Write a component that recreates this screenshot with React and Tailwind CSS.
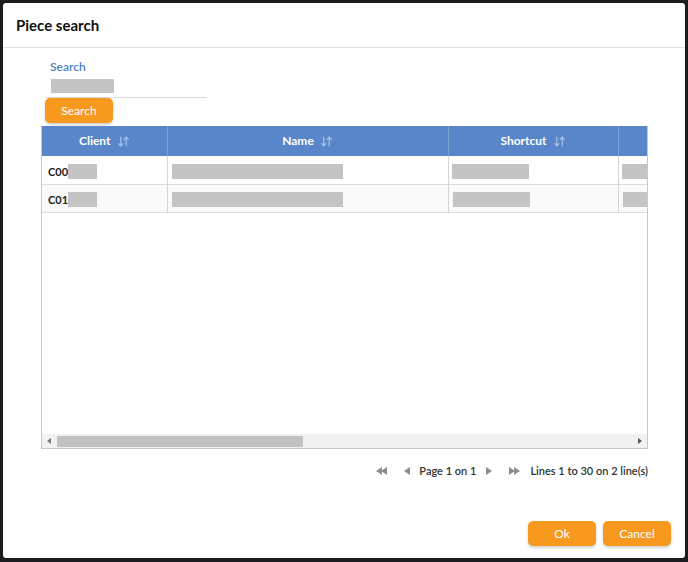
import React from 'react';
import { ArrowDownUp } from 'lucide-react';

const font = { fontFamily: 'Lato, "Noto Sans", sans-serif' };

const rows = [
    { code: 'C00', nameW: 171, shortW: 77 },
    { code: 'C01', nameW: 171, shortW: 77 },
];

const Block = ({ w, h = 15, block }) => (
    <span className={`${block ? 'block' : 'inline-block align-middle'} bg-[#c4c4c4]`} style={{ width: w, height: h }} />
);

const HeadCell = ({ label, w, last }) => (
    <th
        className={`h-[30px] text-center text-[12px] font-bold text-white ${last ? '' : 'border-r border-[#7fa2d6]'}`}
        style={{ width: w }}
    >
        {label && (
            <span className="inline-flex items-center gap-1.5">
                {label}
                <ArrowDownUp size={13} strokeWidth={2.2} className="text-[#a9c6ee]" />
            </span>
        )}
    </th>
);

const Tri = ({ dir = 'left', double }) => {
    const one = dir === 'left' ? 'M7 1 L1 5 L7 9 Z' : 'M1 1 L7 5 L1 9 Z';
    return (
        <svg width={double ? 13 : 8} height="10" viewBox={double ? '0 0 13 10' : '0 0 8 10'} className="fill-[#8c8c8c]">
            <path d={one} />
            {double && <path d={one} transform="translate(5 0)" />}
        </svg>
    );
};

const App = () => {
    return (
        <div className="h-[562px] w-[688px] bg-[#1c1c1e] pt-[3px] pl-[3px] pr-[3px] pb-[4px]" style={font}>
            <div className="flex h-full flex-col rounded-[3px] bg-white">
                {/* header */}
                <div className="flex h-[45px] items-center border-b border-[#e3e3e3] px-[13px]">
                    <h1 className="text-[15px] font-bold text-[#111]">Piece search</h1>
                </div>

                <div className="flex flex-1 flex-col pl-[38px] pr-[37px]">
                    {/* search field */}
                    <div className="ml-[4px] mt-[12px] w-[162px]">
                        <div className="pl-[5px] text-[12px] font-semibold leading-[14px] text-[#4f7fbf]">Search</div>
                        <div className="mt-[5px] border-b border-[#d9d9d9] pb-[4px] pl-[6px]">
                            <Block w={63} h={14} block />
                        </div>
                    </div>
                    <button className="ml-[4px] h-[25px] w-[68px] rounded-[5px] bg-[#f7991e] text-[12px] text-white shadow-[0_2px_3px_rgba(0,0,0,0.18)]">
                        Search
                    </button>

                    {/* table */}
                    <div className="mt-[3px] flex h-[323px] w-[607px] flex-col overflow-hidden border border-[#c8c8c8] border-t-0">
                        <div className="flex-1 overflow-hidden">
                            <table className="table-fixed border-collapse" style={{ width: 776 }}>
                                <thead className="bg-[#5886c9]">
                                    <tr>
                                        <HeadCell label="Client" w={125} />
                                        <HeadCell label="Name" w={281} />
                                        <HeadCell label="Shortcut" w={170} />
                                        <HeadCell label="" w={200} last />
                                    </tr>
                                </thead>
                                <tbody>
                                    {rows.map((r, i) => (
                                        <tr key={i} className={`h-[28px] border-b border-[#dcdcdc] ${i % 2 ? 'bg-[#fafafa]' : 'bg-white'}`}>
                                            <td className="border-r border-[#d8d2d2] pl-[6px]">
                                                <span className="text-[11px] font-bold text-[#222] align-middle">{r.code}</span>
                                                <Block w={29} />
                                            </td>
                                            <td className="border-r border-[#d8d2d2] pl-[4px]">
                                                <Block w={r.nameW} />
                                            </td>
                                            <td className={`border-r border-[#d8d2d2] ${i ? 'pl-[4px]' : 'pl-[3px]'}`}>
                                                <Block w={r.shortW} />
                                            </td>
                                            <td className={i ? 'pl-[4px]' : 'pl-[3px]'}>
                                                <Block w={40} />
                                            </td>
                                        </tr>
                                    ))}
                                </tbody>
                            </table>
                        </div>
                        {/* horizontal scrollbar */}
                        <div className="flex h-[14px] items-center bg-[#f1f1f1]">
                            <span className="ml-[5px] mr-[6px] border-y-[3px] border-r-[4px] border-y-transparent border-r-[#777]" />
                            <div className="h-[11px] w-[246px] bg-[#c1c1c1]" />
                            <span className="ml-auto mr-[5px] border-y-[3px] border-l-[4px] border-y-transparent border-l-[#555]" />
                        </div>
                    </div>

                    {/* pagination */}
                    <div className="mt-[14px] flex items-center justify-end text-[11px] font-semibold text-[#333]">
                        <Tri double />
                        <span className="ml-[15px]"><Tri /></span>
                        <span className="ml-[8px]">Page 1 on 1</span>
                        <span className="ml-[9px]"><Tri dir="right" /></span>
                        <span className="ml-[15px]"><Tri dir="right" double /></span>
                        <span className="ml-[9px]">Lines 1 to 30 on 2 line(s)</span>
                    </div>

                    <div className="flex-1" />

                    {/* footer buttons */}
                    <div className="-mr-[23px] mb-[12px] flex justify-end gap-[7px]">
                        <button className="h-[25px] w-[68px] rounded-[5px] bg-[#f7991e] text-[12px] text-white shadow-[0_2px_3px_rgba(0,0,0,0.18)]">
                            Ok
                        </button>
                        <button className="h-[25px] w-[68px] rounded-[5px] bg-[#f7991e] text-[12px] text-white shadow-[0_2px_3px_rgba(0,0,0,0.18)]">
                            Cancel
                        </button>
                    </div>
                </div>
            </div>
        </div>
    );
};

export default App;
